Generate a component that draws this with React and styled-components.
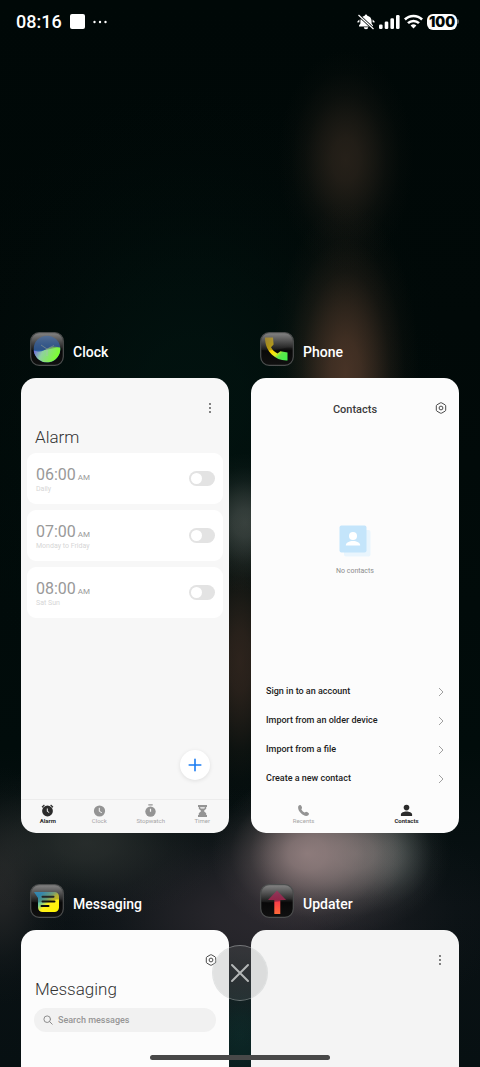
import React, { useState } from "react";
import styled, { createGlobalStyle, css } from "styled-components";

const GlobalStyle = createGlobalStyle`
  * {
    box-sizing: border-box;
  }
  body {
    margin: 0;
    background: #010807;
    font-family: Roboto, "Noto Sans", sans-serif;
  }
  h1, h2, h3, p, ul {
    margin: 0;
    padding: 0;
    font-weight: 400;
  }
  button {
    border: none;
    background: none;
    padding: 0;
    font-family: inherit;
    cursor: pointer;
  }
`;

/* soft light spot of the wallpaper, fades out like a blur */
const glow = (x, y, w, h, rgb, alpha) => {
  const stops = [[1, 0], [0.88, 20], [0.6, 40], [0.28, 60], [0.08, 80], [0, 100]]
    .map(([k, at]) => `rgba(${rgb}, ${(alpha * k).toFixed(3)}) ${at}%`)
    .join(", ");
  return `radial-gradient(ellipse ${w}px ${h}px at ${x}% ${y}%, ${stops})`;
};

const wallpaper = [
  glow(64, 80, 96, 80, "150, 130, 130", 0.9),
  glow(74, 80, 96, 78, "134, 126, 124", 0.75),
  glow(82, 80, 50, 60, "90, 112, 108", 0.35),
  glow(72, 35, 74, 170, "84, 58, 43", 0.85),
  glow(72, 15, 68, 110, "44, 36, 28", 0.85),
  glow(51, 49, 56, 70, "92, 98, 94", 0.6),
  glow(50, 62, 52, 150, "56, 41, 33", 0.8),
  glow(18, 79, 140, 80, "52, 56, 54", 0.7),
  glow(0, 83, 70, 120, "46, 46, 46", 0.7),
  glow(55, 86, 240, 130, "48, 44, 50", 0.85),
  glow(50, 97, 70, 90, "14, 48, 46", 0.7),
  glow(40, 38, 260, 320, "2, 22, 18", 0.7),
  "linear-gradient(180deg, #000807 0%, #010908 30%, #010c0b 70%, #0a1114 85%, #071012 100%)"
].join(", ");

const Screen = styled.div`
  height: 100vh;
  overflow: hidden;
  display: flex;
  flex-direction: column;
  background: ${wallpaper};
`;

const StatusBar = styled.header`
  display: flex;
  justify-content: space-between;
  align-items: center;
  flex: none;
  height: 43px;
  padding: 0 21px 0 16px;
  color: #fff;
`;

const StatusGroup = styled.div`
  display: flex;
  align-items: center;
  gap: ${({ $gap }) => $gap}px;
`;

const Time = styled.time`
  font-size: 18px;
  font-weight: 500;
  line-height: 24px;
`;

const RecentApps = styled.main`
  display: grid;
  grid-template-columns: 1fr 1fr;
  gap: 51px 22px;
  padding: 289px 21px 0;
`;

const Task = styled.section`
  display: flex;
  flex-direction: column;
  gap: 12px;
`;

const TaskHeader = styled.div`
  display: flex;
  align-items: center;
  gap: 9px;
  padding-left: 9px;
  height: 34px;
`;

const TaskName = styled.h2`
  padding-top: 6px;
  font-size: 14px;
  line-height: 18px;
  font-weight: 500;
  color: #fff;
`;

const Card = styled.article`
  display: flex;
  flex-direction: column;
  position: relative;
  aspect-ratio: 16 / 35;
  border-radius: 15px;
  overflow: hidden;
  background: ${({ $tone }) => $tone};
`;

const TopBar = styled.div`
  display: grid;
  grid-template-columns: 1fr auto 1fr;
  align-items: center;
  height: 22px;
  margin-top: 19px;
  padding: 0 12px;
`;

const TopTitle = styled.h3`
  grid-column: 2;
  padding-top: 3px;
  font-size: 11px;
  line-height: 16px;
  font-weight: 500;
  color: #3c3c3c;
`;

const IconButton = styled.button`
  grid-column: 3;
  justify-self: end;
  display: flex;
  color: #4a4a4a;
`;

const BigTitle = styled.h1`
  padding: 9px 14px 1px;
  font-size: 17px;
  line-height: 18px;
  font-weight: 300;
  color: #333;
`;

const AlarmList = styled.ul`
  display: flex;
  flex-direction: column;
  gap: 6px;
  padding: 6px;
  list-style: none;
`;

const AlarmItem = styled.li`
  display: flex;
  align-items: center;
  justify-content: space-between;
  height: 51px;
  padding: 0 8px 0 9px;
  border-radius: 9px;
  background: #fff;
`;

const AlarmTime = styled.p`
  font-size: 16px;
  line-height: 20px;
  color: #999;

  small {
    margin-left: 2px;
    font-size: 8px;
    line-height: 8px;
  }
`;

const AlarmDays = styled.p`
  font-size: 7px;
  line-height: 8px;
  color: #d6d6d6;
`;

const Switch = styled.input`
  appearance: none;
  display: flex;
  align-items: center;
  width: 26px;
  height: 15px;
  margin: 0;
  padding: 0 2px;
  border-radius: 8px;
  background: #e3e3e3;
  cursor: pointer;

  &::before {
    content: "";
    width: 11px;
    height: 11px;
    border-radius: 50%;
    background: #fff;
  }
  &:checked {
    justify-content: flex-end;
    background: #1b7cf2;
  }
`;

const AddButton = styled.button`
  display: flex;
  align-items: center;
  justify-content: center;
  align-self: flex-end;
  width: 30px;
  height: 30px;
  margin: auto 19px 19px 0;
  border-radius: 50%;
  background: #fff;
  box-shadow: 0 1px 4px rgba(0, 0, 0, 0.1);
`;

const TabBar = styled.nav`
  display: flex;
  flex: none;
  height: 34px;
  padding: 4px 1px 0;
  border-top: 1px solid ${({ $line }) => ($line ? "#ececec" : "transparent")};
`;

const Tab = styled.button`
  flex: 1;
  display: flex;
  flex-direction: column;
  align-items: center;
  font-size: 6px;
  line-height: 8px;
  color: #a6a6a6;

  svg {
    color: #949494;
  }

  ${({ $active }) =>
    $active &&
    css`
      font-weight: 700;
      color: #2b2b2b;
      svg {
        color: #2b2b2b;
      }
    `}
`;

const Empty = styled.div`
  display: flex;
  flex-direction: column;
  align-items: center;
  gap: 8px;
  margin-top: 106px;
  font-size: 7px;
  line-height: 12px;
  color: #8c8c8c;
`;

const ActionList = styled.ul`
  margin-top: auto;
  padding: 0 15px 6px;
  list-style: none;
`;

const Action = styled.button`
  display: flex;
  align-items: center;
  justify-content: space-between;
  width: 100%;
  font-size: 9px;
  font-weight: 500;
  line-height: 29px;
  color: #1c1c1c;
`;

const SearchBox = styled.label`
  display: flex;
  align-items: center;
  gap: 5px;
  height: 24px;
  margin: 9px 13px 0;
  padding: 0 9px;
  border-radius: 12px;
  background: #f1f1f1;
  color: #8c8c8c;
`;

const SearchInput = styled.input`
  flex: 1;
  min-width: 0;
  padding: 0;
  border: none;
  outline: none;
  background: none;
  font-family: inherit;
  font-size: 9px;
  font-weight: 500;
  line-height: 14px;
  color: #333;

  &::placeholder {
    color: #969696;
    opacity: 1;
  }
`;

const ClearAll = styled.button`
  position: fixed;
  left: 50%;
  bottom: 66px;
  display: flex;
  align-items: center;
  justify-content: center;
  width: 56px;
  height: 56px;
  margin-left: -28px;
  border-radius: 50%;
  border: 1px solid rgba(200, 204, 204, 0.5);
  background: rgba(120, 125, 125, 0.2);
  background-clip: padding-box;
`;

const HomeBar = styled.div`
  position: fixed;
  left: 50%;
  bottom: 7px;
  width: 180px;
  height: 5px;
  margin-left: -90px;
  border-radius: 3px;
  background: #484848;
`;

/* status bar icons */
const MutedIcon = () => (
  <svg width="18" height="16" viewBox="0 0 18 16">
    <path d="M9 .6a1.300 1.300 0 0 1 1.300 1.100C13 2.300 14.600 4.200 14.600 7v2.600l1.400 1.800v1.200H2v-1.200l1.400-1.800V7c0-2.800 1.600-4.700 4.300-5.300A1.300 1.300 0 0 1 9 .6z" fill="#fff" />
    <path d="M6.800 13.200h4.400a2.200 2 0 0 1-4.400 0zM.4 7.400 2.400 5.400v2.800L.4 8.600zM17.600 7.400l-2-2v2.800l2 .4z" fill="#fff" />
    <path d="M2 1.500 16 14.500" stroke="#010807" strokeWidth="2.800" />
    <path d="M1.500 1 16.500 15" stroke="#fff" strokeWidth="1.200" />
  </svg>
);

const SignalIcon = () => (
  <svg width="21" height="16" viewBox="0 0 21 16" fill="#fff">
    <rect x="0" y="10.500" width="3.600" height="4.500" rx="1.300" />
    <rect x="5.700" y="7.500" width="3.600" height="7.500" rx="1.300" />
    <rect x="11.400" y="4.200" width="3.600" height="10.800" rx="1.300" />
    <rect x="17" y="1" width="3.600" height="14" rx="1.300" />
  </svg>
);

const WifiIcon = () => (
  <svg width="19" height="16" viewBox="0 0 19 16" fill="none" stroke="#fff" strokeWidth="2.600">
    <path d="M.9 5.500a12.200 12.200 0 0 1 17.200 0" />
    <path d="M4 9.200a7.800 7.800 0 0 1 11 0" />
    <path d="M9.500 14.500 6.600 11.600a4.100 4.100 0 0 1 5.800 0z" fill="#fff" stroke="none" />
  </svg>
);

const Battery = styled.span`
  display: flex;
  align-items: center;
  justify-content: center;
  width: 30px;
  height: 16px;
  border-radius: 6px;
  background: #fff;
  color: #010807;
  font-family: Inter, Roboto, sans-serif;
  font-size: 14px;
  line-height: 16px;
  font-weight: 900;
`;

const BatteryCap = styled.i`
  width: 2px;
  height: 5px;
  border-radius: 0 2px 2px 0;
  background: #5b6060;
`;

const BatteryBox = styled.div`
  display: flex;
  align-items: center;
`;

const NoticeSquare = styled.i`
  width: 15px;
  height: 15px;
  border-radius: 2px;
  background: #fff;
`;

const MoreDots = () => (
  <svg width="14" height="4" viewBox="0 0 14 4" fill="#fff">
    <circle cx="1.500" cy="2" r="1.200" />
    <circle cx="7" cy="2" r="1.200" />
    <circle cx="12.500" cy="2" r="1.200" />
  </svg>
);

/* launcher icons share the same glossy black tile */
const AppIcon = ({ id, children }) => (
  <svg width="34" height="34" viewBox="0 0 34 34">
    <defs>
      <linearGradient id={`${id}-tile`} x1="0" y1="0" x2="0" y2="1">
        <stop offset="0" stopColor="#7c7c7c" />
        <stop offset="0.4" stopColor="#2a2a2a" />
        <stop offset="0.55" stopColor="#080808" />
        <stop offset="1" stopColor="#101010" />
      </linearGradient>
      <linearGradient id={`${id}-gloss`} x1="0" y1="0" x2="0" y2="1">
        <stop offset="0" stopColor="#888" stopOpacity="0.55" />
        <stop offset="1" stopColor="#2c2c2c" stopOpacity="0.3" />
      </linearGradient>
    </defs>
    <rect x="0.700" y="0.700" width="32.600" height="32.600" rx="8.500" fill={`url(#${id}-tile)`} stroke="#4c4e4e" strokeWidth="1.200" />
    {children}
    <path d="M1.500 17V9.500a8 8 0 0 1 8-8h15a8 8 0 0 1 8 8V16C24 14 18 20 1.500 18z" fill={`url(#${id}-gloss)`} />
  </svg>
);

const ClockLogo = () => (
  <AppIcon id="clock">
    <defs>
      <linearGradient id="clock-low" x1="0" y1="0" x2="1" y2="0.300">
        <stop offset="0" stopColor="#6a50f0" />
        <stop offset="0.400" stopColor="#8fd0a0" />
        <stop offset="1" stopColor="#7cff2e" />
      </linearGradient>
    </defs>
    <circle cx="17" cy="17" r="13.300" fill="#2b62b0" />
    <path d="M3.700 18.500c7 2.500 10 0 14-2s8-2.500 12.500-1a13.300 13.300 0 0 1-26.500 3z" fill="url(#clock-low)" />
    <path d="M11 13 17 17l7-3.500M17 17v7" stroke="#a9bdb8" strokeWidth="1" fill="none" opacity="0.700" />
  </AppIcon>
);

const PhoneLogo = () => (
  <AppIcon id="phone">
    <defs>
      <linearGradient id="phone-fill" x1="0" y1="0" x2="1" y2="1">
        <stop offset="0" stopColor="#c89a00" />
        <stop offset="0.450" stopColor="#ffd800" />
        <stop offset="0.600" stopColor="#e4f020" />
        <stop offset="0.720" stopColor="#5ee84a" />
        <stop offset="1" stopColor="#3ff04a" />
      </linearGradient>
    </defs>
    <path d="M5 5.500h8l.6 7-2.600 2.800c1.500 3 3.800 4.800 6.500 6.200l3-2.300 7 1.300V28.500c-6.500.3-11.500-2-15.500-5.700C7.500 18.500 5 12.500 5 5.500z" fill="url(#phone-fill)" />
  </AppIcon>
);

const MessagingLogo = () => (
  <AppIcon id="messaging">
    <defs>
      <linearGradient id="messaging-fill" x1="0" y1="0" x2="1" y2="0.900">
        <stop offset="0.200" stopColor="#15a5ea" />
        <stop offset="0.450" stopColor="#7fcb8a" />
        <stop offset="0.600" stopColor="#fff01c" />
        <stop offset="1" stopColor="#fff500" />
      </linearGradient>
    </defs>
    <path d="M4 8h20.500a4.500 4.500 0 0 1 4.500 4.500v11a4.500 4.500 0 0 1-4.500 4.500h-12A4.500 4.500 0 0 1 8 23.500V14z" fill="url(#messaging-fill)" />
    <path d="M12.500 12.800h11M12.500 17.500h12M11.500 22h7" stroke="#0c0c0c" strokeWidth="2" strokeLinecap="round" />
  </AppIcon>
);

const UpdaterLogo = () => (
  <AppIcon id="updater">
    <defs>
      <linearGradient id="updater-fill" x1="0" y1="0" x2="0" y2="1">
        <stop offset="0" stopColor="#b01050" />
        <stop offset="0.400" stopColor="#c01a50" />
        <stop offset="0.500" stopColor="#f83e48" />
        <stop offset="1" stopColor="#ff6a38" />
      </linearGradient>
    </defs>
    <path d="M17 6.500 26 16H20.300v14h-6V16H8z" fill="url(#updater-fill)" />
  </AppIcon>
);

/* in-app icons */
const KebabIcon = () => (
  <svg width="14" height="12" viewBox="0 0 14 12" fill="currentColor">
    <circle cx="7" cy="2" r="0.900" />
    <circle cx="7" cy="6" r="0.900" />
    <circle cx="7" cy="10" r="0.900" />
  </svg>
);

const SettingsIcon = () => (
  <svg width="12" height="12" viewBox="0 0 12 12" fill="none" stroke="currentColor">
    <path d="M5.300.9q.7-.4 1.400 0L10 2.800q.7.400.7 1.100v4.200q0 .7-.7 1.100l-3.300 1.900q-.7.400-1.400 0L2 9.200q-.7-.4-.7-1.100V3.900q0-.7.7-1.100z" />
    <circle cx="6" cy="6" r="1.900" />
  </svg>
);

const PlusIcon = () => (
  <svg width="14" height="14" viewBox="0 0 14 14" stroke="#1b7cf2" strokeWidth="1.600" strokeLinecap="round">
    <path d="M7 1.200v11.600M1.200 7h11.600" />
  </svg>
);

const AlarmTabIcon = () => (
  <svg width="13" height="13" viewBox="0 0 13 13" fill="currentColor">
    <circle cx="6.500" cy="7" r="5.400" />
    <path d="M1 3.200 3.400 1M12 3.200 9.600 1" stroke="currentColor" strokeWidth="1.200" />
    <path d="M6.300 4.500V7.400L8.200 8.500" stroke="#f7f7f7" fill="none" />
  </svg>
);

const ClockTabIcon = () => (
  <svg width="13" height="13" viewBox="0 0 13 13" fill="currentColor">
    <circle cx="6.500" cy="7" r="5.600" />
    <path d="M6.300 3.800V7.300L8.800 8.700" stroke="#f7f7f7" fill="none" />
  </svg>
);

const StopwatchTabIcon = () => (
  <svg width="13" height="13" viewBox="0 0 13 13" fill="currentColor">
    <circle cx="6.500" cy="7.600" r="5.200" />
    <path d="M4.300.9h4.400" stroke="currentColor" strokeWidth="1.200" />
    <path d="M6.500 4.800v3" stroke="#f7f7f7" strokeWidth="1.200" />
  </svg>
);

const TimerTabIcon = () => (
  <svg width="13" height="13" viewBox="0 0 13 13" fill="currentColor">
    <path d="M2 1h9v2H2zM2 11h9v2H2zM2.800 3h7.400v1.800L7.800 7l2.400 2.200V11H2.800V9.200L5.200 7 2.800 4.800z" />
    <path d="M4 3.200h5L8.300 4.500H4.700z" fill="#f7f7f7" />
  </svg>
);

const RecentsTabIcon = () => (
  <svg width="13" height="13" viewBox="0 0 13 13" fill="currentColor">
    <path d="M1.400 2C2 1.200 3 .8 3.700 1.200c.8.700 1.300 1.800 1.400 2.700L4.300 5.200c.7 1.500 1.900 2.700 3.400 3.400l1.400-.8c1 .1 2 .6 2.700 1.400.4.700 0 1.800-.8 2.400C6.500 13.500-.4 6.500 1.400 2z" />
  </svg>
);

const PersonTabIcon = () => (
  <svg width="13" height="13" viewBox="0 0 13 13" fill="currentColor">
    <circle cx="6.500" cy="3.600" r="2.800" />
    <path d="M.9 12V10.500C.9 8.500 3.800 7.500 6.500 7.500s5.600 1 5.600 3V12z" />
  </svg>
);

const NoContactsIcon = () => (
  <svg width="32" height="32" viewBox="0 0 32 32">
    <rect x="5" y="5" width="26.500" height="26.500" rx="2" fill="#e9f5fd" />
    <rect x="0.500" y="0.500" width="27" height="27" rx="2" fill="#c4e5fb" />
    <circle cx="14" cy="11" r="4" fill="#fff" />
    <path d="M6.800 20.500c0-3 3.500-4.500 7.200-4.500s7.200 1.500 7.200 4.500z" fill="#fff" />
  </svg>
);

const ChevronIcon = () => (
  <svg width="6" height="10" viewBox="0 0 6 10" fill="none" stroke="#a0a0a0">
    <path d="M1 1l4 4-4 4" />
  </svg>
);

const SearchIcon = () => (
  <svg width="10" height="10" viewBox="0 0 10 10" fill="none" stroke="currentColor" strokeLinecap="round">
    <circle cx="4.200" cy="4.200" r="3.300" />
    <path d="M6.700 6.700 9.200 9.200" />
  </svg>
);

const CloseIcon = () => (
  <svg width="20" height="20" viewBox="0 0 20 20" stroke="#b4b7b7" strokeWidth="2" strokeLinecap="round">
    <path d="M2 2l16 16M18 2L2 18" />
  </svg>
);

const ALARMS = [
  { time: "06:00", days: "Daily" },
  { time: "07:00", days: "Monday to Friday" },
  { time: "08:00", days: "Sat Sun" }
];

const CLOCK_TABS = [
  { label: "Alarm", Icon: AlarmTabIcon },
  { label: "Clock", Icon: ClockTabIcon },
  { label: "Stopwatch", Icon: StopwatchTabIcon },
  { label: "Timer", Icon: TimerTabIcon }
];

const PHONE_TABS = [
  { label: "Recents", Icon: RecentsTabIcon },
  { label: "Contacts", Icon: PersonTabIcon }
];

const CONTACT_ACTIONS = [
  "Sign in to an account",
  "Import from an older device",
  "Import from a file",
  "Create a new contact"
];

const Tabs = ({ items, initial, line }) => {
  const [active, setActive] = useState(initial);
  return (
    <TabBar $line={line}>
      {items.map(({ label, Icon }) => (
        <Tab key={label} $active={label === active} onClick={() => setActive(label)}>
          <Icon />
          {label}
        </Tab>
      ))}
    </TabBar>
  );
};

const AppTask = ({ name, logo, tone, children }) => (
  <Task>
    <TaskHeader>
      {logo}
      <TaskName>{name}</TaskName>
    </TaskHeader>
    <Card $tone={tone}>{children}</Card>
  </Task>
);

const ClockApp = () => (
  <>
    <TopBar>
      <IconButton aria-label="More options">
        <KebabIcon />
      </IconButton>
    </TopBar>
    <BigTitle>Alarm</BigTitle>
    <AlarmList>
      {ALARMS.map(({ time, days }) => (
        <AlarmItem key={time}>
          <div>
            <AlarmTime>
              {time}
              <small>AM</small>
            </AlarmTime>
            <AlarmDays>{days}</AlarmDays>
          </div>
          <Switch type="checkbox" role="switch" aria-label={`${time} alarm`} />
        </AlarmItem>
      ))}
    </AlarmList>
    <AddButton aria-label="Add alarm">
      <PlusIcon />
    </AddButton>
    <Tabs items={CLOCK_TABS} initial="Alarm" line />
  </>
);

const PhoneApp = () => (
  <>
    <TopBar>
      <TopTitle>Contacts</TopTitle>
      <IconButton aria-label="Settings">
        <SettingsIcon />
      </IconButton>
    </TopBar>
    <Empty>
      <NoContactsIcon />
      <p>No contacts</p>
    </Empty>
    <ActionList>
      {CONTACT_ACTIONS.map(text => (
        <li key={text}>
          <Action>
            {text}
            <ChevronIcon />
          </Action>
        </li>
      ))}
    </ActionList>
    <Tabs items={PHONE_TABS} initial="Contacts" />
  </>
);

const MessagingApp = () => (
  <>
    <TopBar>
      <IconButton aria-label="Settings">
        <SettingsIcon />
      </IconButton>
    </TopBar>
    <BigTitle>Messaging</BigTitle>
    <SearchBox>
      <SearchIcon />
      <SearchInput type="text" aria-label="Search messages" placeholder="Search messages" />
    </SearchBox>
  </>
);

const UpdaterApp = () => (
  <TopBar>
    <IconButton aria-label="More options">
      <KebabIcon />
    </IconButton>
  </TopBar>
);

const App = () => (
  <>
    <GlobalStyle />
    <Screen>
      <StatusBar>
        <StatusGroup $gap={8}>
          <Time>08:16</Time>
          <NoticeSquare />
          <MoreDots />
        </StatusGroup>
        <StatusGroup $gap={4}>
          <MutedIcon />
          <SignalIcon />
          <WifiIcon />
          <BatteryBox>
            <Battery>100</Battery>
            <BatteryCap />
          </BatteryBox>
        </StatusGroup>
      </StatusBar>
      <RecentApps>
        <AppTask name="Clock" logo={<ClockLogo />} tone="#f7f7f7">
          <ClockApp />
        </AppTask>
        <AppTask name="Phone" logo={<PhoneLogo />} tone="#fcfcfc">
          <PhoneApp />
        </AppTask>
        <AppTask name="Messaging" logo={<MessagingLogo />} tone="#fcfcfc">
          <MessagingApp />
        </AppTask>
        <AppTask name="Updater" logo={<UpdaterLogo />} tone="#f4f4f4">
          <UpdaterApp />
        </AppTask>
      </RecentApps>
      <ClearAll aria-label="Close all apps">
        <CloseIcon />
      </ClearAll>
      <HomeBar />
    </Screen>
  </>
);

export default App;
